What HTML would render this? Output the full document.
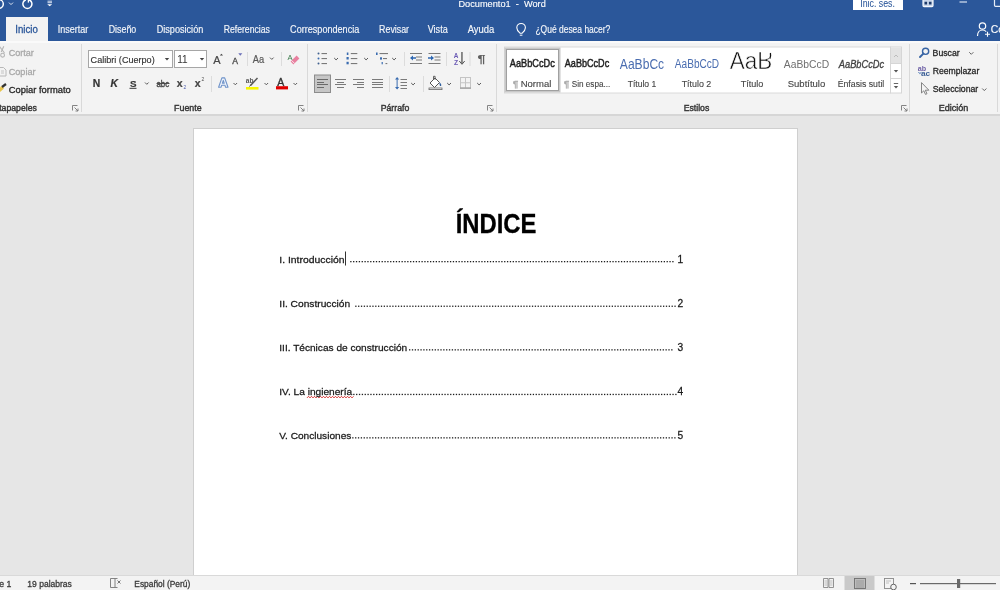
<!DOCTYPE html>
<html><head><meta charset="utf-8"><style>
*{margin:0;padding:0;box-sizing:border-box}
html,body{width:1000px;height:590px;overflow:hidden;background:#e6e6e6;font-family:"Liberation Sans",sans-serif}
body{will-change:transform}
.a{position:absolute}
svg text{font-family:"Liberation Sans",sans-serif}
</style></head><body>
<div class="a" style="left:0;top:0;width:1000px;height:41px;background:#2b579a"></div>
<div class="a" style="left:853px;top:0;width:50px;height:10px;background:#fff"></div>
<div class="a" style="left:6px;top:17px;width:41.6px;height:26px;background:#f3f3f3"></div>
<div class="a" style="left:0;top:41px;width:1000px;height:73px;background:#f3f3f3"></div>
<div class="a" style="left:0;top:41px;width:1000px;height:1.5px;background:#fafafa"></div>
<div class="a" style="left:0;top:114px;width:1000px;height:1.5px;background:#d6d6d6"></div>
<div class="a" style="left:193px;top:128px;width:605px;height:447px;background:#fff;border:1px solid #cfcfcf;border-bottom:none"></div>
<div class="a" style="left:0;top:575px;width:1000px;height:15px;background:#f3f3f3;border-top:1px solid #d9d9d9"></div>
<svg class="a" style="left:0;top:0" width="1000" height="590" viewBox="0 0 1000 590">
<g fill="none" stroke-linecap="butt">
<!-- quick access icons -->
<circle cx="-1" cy="4" r="4.3" stroke="#fff" stroke-width="1.5"/>
<path d="M9 2.6 l2 2 l2 -2" stroke="#dfe6f2" stroke-width="1"/>
<path d="M28.9 -0.3 A4.5 4.5 0 1 1 25.9 -0.3" stroke="#fff" stroke-width="1.5"/>
<path d="M28.4 -1 v3.6" stroke="#fff" stroke-width="1.3"/>
<path d="M47.5 1.2 h4.5 M47.5 2.7 h4.5" stroke="#e8eef8" stroke-width="0.9"/>
<path d="M47.2 4.2 h5 l-2.5 2z" fill="#fff" stroke="none"/>
<!-- window controls -->
<rect x="923" y="-2" width="10" height="8.6" rx="1" fill="#c9d6ea" stroke="#f4f7fc" stroke-width="1.2"/>
<path d="M924.5 1.8 h2.6 v2.6 h-2.6z M928.9 1.8 h2.6 v2.6 h-2.6z" fill="#1d3a6a" stroke="none"/>
<path d="M959.5 2 h7.5" stroke="#d8e2f2" stroke-width="1.2"/>
<rect x="994.5" y="-3" width="10" height="9.3" rx="1" stroke="#e8eef8" stroke-width="1.2"/>
<!-- lightbulb -->
<path d="M520 33.2 C518 31.5 516.8 29.8 516.8 27.8 A4.3 4.3 0 0 1 525.4 27.8 C525.4 29.8 524.2 31.5 522.2 33.2 Z" stroke="#fff" stroke-width="1.1"/>
<path d="M519.8 35.2 h2.6" stroke="#fff" stroke-width="1"/>
<!-- person -->
<circle cx="982.5" cy="26" r="3.2" stroke="#fff" stroke-width="1.2"/>
<path d="M977.5 36 C977.5 32 980 30 982.5 30 C984 30 985.3 30.6 986.2 31.6" stroke="#fff" stroke-width="1.2"/>
<path d="M985 34.2 h5 M987.5 31.7 v5" stroke="#fff" stroke-width="1.1"/>

<!-- clipboard icons -->
<path d="M-0.5 46.5 L4.5 53 M3.8 46.2 L1.2 52" stroke="#b4b4b4" stroke-width="1.1"/>
<circle cx="2.6" cy="55.2" r="1.9" stroke="#b4b4b4" stroke-width="1.1"/>
<path d="M-1 67.5 h4.5 l2.5 2.5 v6 h-7" stroke="#b8b8b8" stroke-width="1"/>
<path d="M1 71 h3 M1 73 h3" stroke="#b8b8b8" stroke-width="0.8"/>
<path d="M-1 93 C1 91 3 90 4 88 L1 86 C0 88 -1 89 -2 90 Z" fill="#e8c44a" stroke="none"/>
<path d="M2 87 L6 84" stroke="#333" stroke-width="2.2"/>

<!-- font icons row1 -->
<path d="M170 58 l-2.5 0 l1.25 1.6z" fill="#444" stroke="none"/>
<path d="M204 58 l-2.5 0 l1.25 1.6z" fill="#444" stroke="none"/>
</g>
<!-- ===== font group ===== -->
<g fill="#444" stroke="none" font-family="Liberation Sans">
<text x="213.2" y="63.8" font-size="11" fill="#484848" stroke="#484848" stroke-width="0.2">A</text>
<path d="M219.8 55.5 l1.6 -1.8 l1.6 1.8z" fill="#444"/>
<text x="232.2" y="63.5" font-size="8.6" fill="#505050" stroke="#505050" stroke-width="0.35">A</text>
<path d="M238.3 53.2 h4 l-2 2.6z" fill="#6a6fb8"/>
<text x="252.8" y="63.3" font-size="10.8" fill="#585858" stroke="#585858" stroke-width="0.2" textLength="11.4" lengthAdjust="spacingAndGlyphs">Aa</text>
<text x="92.8" y="86.6" font-size="10.4" font-weight="bold" fill="#333" stroke="#333" stroke-width="0.2">N</text>
<text x="110.6" y="86.6" font-size="10.4" font-weight="bold" font-style="italic" fill="#333" stroke="#333" stroke-width="0.2">K</text>
<text x="130" y="86.5" font-size="9.8" font-weight="bold" fill="#333" stroke="#333" stroke-width="0.15">S</text>
<rect x="129.5" y="87.8" width="7" height="1" fill="#333"/>
<text x="156.5" y="86.5" font-size="8.8" fill="#444" stroke="#444" stroke-width="0.35" textLength="12.6" lengthAdjust="spacingAndGlyphs">abc</text>
<rect x="156.5" y="83" width="13" height="0.9" fill="#444"/>
<text x="176.8" y="86.6" font-size="10.5" font-weight="bold" fill="#444" stroke="#444" stroke-width="0.2">x</text>
<text x="183.5" y="88.6" font-size="5" fill="#5565b0">2</text>
<text x="194.8" y="86.6" font-size="10.5" font-weight="bold" fill="#444" stroke="#444" stroke-width="0.2">x</text>
<text x="201.5" y="81.3" font-size="5" fill="#555">2</text>
<path d="M218.6 87.3 L221.9 77.9 L224.7 77.9 L228 87.3 L225.6 87.3 L224.9 85.2 L221.7 85.2 L221 87.3 Z M222.4 83.2 L224.2 83.2 L223.3 80.4 Z" fill="#eef3fb" fill-rule="evenodd" stroke="#6f93c9" stroke-width="1.1" stroke-linejoin="round"/>
<path d="M250.5 85.5 l7 -7.5" stroke="#555" stroke-width="1.5"/>
<path d="M249.5 86.5 l1.6 -2" stroke="#444" stroke-width="1"/>
<text x="245.8" y="82.5" font-size="6.5" font-weight="bold" fill="#555">ab</text>
<rect x="246" y="87" width="12.5" height="2.6" fill="#f5f500"/>
<text x="277.3" y="85.8" font-size="10.5" fill="#333" stroke="#333" stroke-width="0.35">A</text>
<rect x="276" y="86.2" width="12" height="3.2" fill="#e00000"/>
<path d="M290.6 61.6 L296.6 55.6 L299.4 58.4 L293.4 64.4z" fill="#e8809f"/>
<path d="M291.66 60.54 L294.46 63.34" stroke="#fff" stroke-width="0.8"/>
<text x="287.5" y="59.5" font-size="7.5" fill="#3a7a4a">A</text>
</g>
<g fill="none" stroke="#5a5a5a" stroke-width="1">
<path d="M270 57.6 l1.8 1.8 l1.8 -1.8"/>
<path d="M145 82.5 l1.8 1.8 l1.8 -1.8"/>
<path d="M233.5 83 l1.8 1.8 l1.8 -1.8"/>
<path d="M264.5 83 l1.8 1.8 l1.8 -1.8"/>
<path d="M293.5 83 l1.8 1.8 l1.8 -1.8"/>
</g>
<rect x="247" y="52" width="1" height="14" fill="#dcdcdc"/>
<rect x="281" y="52" width="1" height="14" fill="#dcdcdc"/>
<rect x="211" y="76" width="1" height="16" fill="#dcdcdc"/>

<!-- ===== paragraph group ===== -->
<g stroke="none">
<circle cx="318.5" cy="53.6" r="1" fill="#40618f"/><circle cx="318.5" cy="58.5" r="1" fill="#3a6cb0"/><circle cx="318.5" cy="63.5" r="1" fill="#40618f"/>
<rect x="321.5" y="53" width="5.5" height="1.1" fill="#7a7a7a"/><rect x="321.5" y="58" width="5.5" height="1.1" fill="#7a7a7a"/><rect x="321.5" y="63" width="5.5" height="1.1" fill="#7a7a7a"/>
<rect x="346.8" y="52.5" width="1.6" height="2.5" fill="#3a6cb0"/><rect x="346.5" y="57" width="2.2" height="2.5" fill="#3a6cb0"/><rect x="346.5" y="61.8" width="2.2" height="2.5" fill="#3a6cb0"/>
<rect x="350.8" y="53" width="6.5" height="1.1" fill="#7a7a7a"/><rect x="350.8" y="58" width="6.5" height="1.1" fill="#7a7a7a"/><rect x="350.8" y="63" width="6.5" height="1.1" fill="#7a7a7a"/>
<rect x="376" y="52.5" width="1.6" height="2.5" fill="#3a6cb0"/><rect x="380" y="57.3" width="2" height="2.3" fill="#3a6cb0"/><rect x="381.6" y="62" width="1.2" height="2.3" fill="#3a6cb0"/>
<rect x="379.5" y="53" width="8.5" height="1.1" fill="#7a7a7a"/><rect x="383" y="58" width="4" height="1.1" fill="#7a7a7a"/><rect x="385.5" y="63" width="1.8" height="1.1" fill="#7a7a7a"/>
<!-- indents -->
<rect x="410" y="53" width="12" height="1" fill="#7a7a7a"/><rect x="416" y="56.5" width="6" height="1" fill="#7a7a7a"/><rect x="416" y="59.5" width="6" height="1" fill="#7a7a7a"/><rect x="410" y="63" width="12" height="1" fill="#7a7a7a"/>
<path d="M410 58 l3 -2.6 v1.8 h3 v1.6 h-3 v1.8z" fill="#2e67b1"/>
<rect x="428.5" y="53" width="12" height="1" fill="#7a7a7a"/><rect x="434.5" y="56.5" width="6" height="1" fill="#7a7a7a"/><rect x="434.5" y="59.5" width="6" height="1" fill="#7a7a7a"/><rect x="428.5" y="63" width="12" height="1" fill="#7a7a7a"/>
<path d="M434 58 l-3 -2.6 v1.8 h-3 v1.6 h3 v1.8z" fill="#2e67b1"/>
<text x="453.7" y="57.6" font-family="Liberation Sans" font-size="6.4" font-weight="bold" fill="#6b5bb5">A</text>
<text x="453.9" y="64.6" font-family="Liberation Sans" font-size="6.8" font-weight="bold" fill="#6b5bb5">Z</text>
<rect x="461.3" y="52" width="1.3" height="11.5" fill="#555"/>
<path d="M459.3 61 l2.7 3.3 l2.7 -3.3" fill="none" stroke="#555" stroke-width="1"/>
<text x="477.6" y="62.6" font-family="Liberation Sans" font-size="11" font-weight="bold" fill="#606060" stroke="#606060" stroke-width="0.1" textLength="8" lengthAdjust="spacingAndGlyphs">¶</text>
<!-- align -->
<rect x="314.5" y="75" width="16" height="17.5" fill="#c6c6c6" stroke="#8c8c8c" stroke-width="1"/>
<rect x="317" y="79" width="11" height="1" fill="#6a6a6a"/><rect x="317" y="82" width="7" height="1" fill="#6a6a6a"/><rect x="317" y="84" width="11" height="1" fill="#6a6a6a"/><rect x="317" y="87" width="7" height="1" fill="#6a6a6a"/>
<rect x="335" y="79" width="11" height="1" fill="#7a7a7a"/><rect x="337" y="82" width="7" height="1" fill="#7a7a7a"/><rect x="335" y="84" width="11" height="1" fill="#7a7a7a"/><rect x="337" y="87" width="7" height="1" fill="#7a7a7a"/>
<rect x="353" y="79" width="11" height="1" fill="#7a7a7a"/><rect x="357" y="82" width="7" height="1" fill="#7a7a7a"/><rect x="353" y="84" width="11" height="1" fill="#7a7a7a"/><rect x="357" y="87" width="7" height="1" fill="#7a7a7a"/>
<rect x="372" y="79" width="11" height="1" fill="#7a7a7a"/><rect x="372" y="82" width="11" height="1" fill="#7a7a7a"/><rect x="372" y="84" width="11" height="1" fill="#7a7a7a"/><rect x="372" y="87" width="11" height="1" fill="#7a7a7a"/>
<!-- line spacing -->
<rect x="396.6" y="78" width="1" height="10.5" fill="#3a6cb0"/>
<path d="M395 79.5 l2.1 -2.5 l2.1 2.5z M395 87 l2.1 2.5 l2.1 -2.5z" fill="#3a6cb0"/>
<rect x="400.5" y="79" width="6.5" height="1" fill="#7a7a7a"/><rect x="400.5" y="82" width="6.5" height="1" fill="#7a7a7a"/><rect x="400.5" y="85" width="6.5" height="1" fill="#7a7a7a"/><rect x="400.5" y="88" width="6.5" height="1" fill="#7a7a7a"/>
<!-- shading -->
<path d="M430 83 l5 -5 l4.5 4.5 l-5 5z" fill="#fff" stroke="#555" stroke-width="1"/>
<path d="M433.5 79.5 v-3.2 h1.6 v3.5" fill="none" stroke="#555" stroke-width="0.9"/>
<path d="M439.5 82.5 c1.5 1 2.3 2.4 1.5 3.5 c-1 0.5 -1.6 -0.6 -1.5 -3.5z" fill="#2e5f9e"/>
<rect x="429" y="88" width="13" height="1.6" fill="#fff" stroke="#666" stroke-width="0.8"/>
<!-- borders -->
<rect x="460.5" y="77.5" width="10" height="10.5" fill="none" stroke="#c4c4c4" stroke-width="1"/>
<path d="M465.5 77.5 v10.5 M460.5 82.75 h10" stroke="#c4c4c4" stroke-width="1"/>
<rect x="460" y="87.5" width="11" height="1.2" fill="#999"/>
</g>
<g fill="none" stroke="#5a5a5a" stroke-width="1">
<path d="M334.2 58 l1.9 1.9 l1.9 -1.9"/>
<path d="M364.2 58 l1.9 1.9 l1.9 -1.9"/>
<path d="M392.2 58 l1.9 1.9 l1.9 -1.9"/>
<path d="M411.2 83 l1.9 1.9 l1.9 -1.9"/>
<path d="M447.2 83 l1.9 1.9 l1.9 -1.9"/>
<path d="M477.2 83 l1.9 1.9 l1.9 -1.9"/>
</g>
<rect x="404" y="52" width="1" height="14" fill="#dcdcdc"/>
<rect x="446" y="52" width="1" height="14" fill="#dcdcdc"/>
<rect x="469.5" y="52" width="1" height="14" fill="#dcdcdc"/>
<rect x="389" y="76" width="1" height="16" fill="#dcdcdc"/>
<rect x="423" y="76" width="1" height="16" fill="#dcdcdc"/>

<!-- group separators -->
<g fill="#d9d9d9">
<rect x="81" y="44" width="1" height="68"/>
<rect x="307" y="44" width="1" height="68"/>
<rect x="496" y="44" width="1" height="68"/>
<rect x="909" y="44" width="1" height="68"/>
<rect x="997" y="44" width="1" height="68"/>
</g>
<!-- launchers -->
<g fill="none" stroke="#777" stroke-width="0.9">
<path d="M72.5 110.5 v-5 h5 M74.5 107.5 l3.5 3.5 M75.5 111 h2.5 v-2.5"/>
<path d="M298.5 110.5 v-5 h5 M300.5 107.5 l3.5 3.5 M301.5 111 h2.5 v-2.5"/>
<path d="M487.5 110.5 v-5 h5 M489.5 107.5 l3.5 3.5 M490.5 111 h2.5 v-2.5"/>
<path d="M901.5 110.5 v-5 h5 M903.5 107.5 l3.5 3.5 M904.5 111 h2.5 v-2.5"/>
</g>
<!-- combo boxes -->
<rect x="88.5" y="50.5" width="84" height="17" fill="#fff" stroke="#a6a6a6" stroke-width="1"/>
<rect x="174.5" y="50.5" width="32" height="17" fill="#fff" stroke="#a6a6a6" stroke-width="1"/>
<path d="M164.8 58 h4.4 l-2.2 2.4z M199.8 58 h4.4 l-2.2 2.4z" fill="#444"/>

<!-- styles gallery -->
<rect x="504.5" y="47" width="386" height="46" fill="#fff" stroke="#dadada" stroke-width="1"/>
<rect x="505.5" y="48.5" width="54" height="43" fill="#fff" stroke="#c8c8c8" stroke-width="2"/>
<rect x="506.5" y="49.5" width="52" height="41" fill="none" stroke="#a0a0a0" stroke-width="1"/>
<rect x="890.5" y="47" width="11" height="46" fill="#fff" stroke="#d6d6d6" stroke-width="1"/>
<rect x="891" y="47.5" width="10" height="15.5" fill="#e3e3e3"/>
<path d="M890.5 63.5 h11 M890.5 78.5 h11" stroke="#d6d6d6" stroke-width="1"/>
<path d="M894 57 l2 -2 l2 2" fill="none" stroke="#b8b8b8" stroke-width="0.9"/>
<path d="M893.8 70 h4.4 l-2.2 2.4z" fill="#555"/>
<path d="M893.8 83.5 h4.4" stroke="#555" stroke-width="0.9"/>
<path d="M893.8 86 h4.4 l-2.2 2.4z" fill="#555"/>

<!--AAB_CLIP-->
<!-- edit group icons -->
<g fill="none" stroke-linecap="round">
<circle cx="925.6" cy="51.3" r="3.1" stroke="#3764a4" stroke-width="1.4"/>
<path d="M923.4 53.6 l-3.4 3.4" stroke="#3764a4" stroke-width="1.9"/>
<path d="M969.5 52.5 l1.8 1.8 l1.8 -1.8" stroke="#555" stroke-width="0.9"/>
<path d="M982.5 88.8 l1.8 1.8 l1.8 -1.8" stroke="#555" stroke-width="0.9"/>
<path d="M921.5 83 v10 l2.3 -2.2 l1.7 3.6 l1.5 -0.7 l-1.7 -3.5 h3.2 z" stroke="#777" stroke-width="0.9" stroke-linejoin="round"/>
</g>
<text x="917.8" y="71" font-size="8" font-weight="bold" fill="#6e60a6" textLength="8.4" lengthAdjust="spacingAndGlyphs">ab</text>
<text x="921" y="76.4" font-size="8" font-weight="bold" fill="#3b5f96" textLength="9.2" lengthAdjust="spacingAndGlyphs">ac</text>
<path d="M918.5 72 l1.2 1.6 l1.6 -1.2" fill="none" stroke="#3a6cb0" stroke-width="0.9"/>

<!-- document extras -->
<rect x="345" y="251.5" width="1" height="14" fill="#333"/>
<g fill="#1e1e1e"><rect x="350.20" y="261.00" width="1.3" height="1.3"/><rect x="353.05" y="261.00" width="1.3" height="1.3"/><rect x="355.90" y="261.00" width="1.3" height="1.3"/><rect x="358.75" y="261.00" width="1.3" height="1.3"/><rect x="361.60" y="261.00" width="1.3" height="1.3"/><rect x="364.45" y="261.00" width="1.3" height="1.3"/><rect x="367.30" y="261.00" width="1.3" height="1.3"/><rect x="370.15" y="261.00" width="1.3" height="1.3"/><rect x="373.00" y="261.00" width="1.3" height="1.3"/><rect x="375.85" y="261.00" width="1.3" height="1.3"/><rect x="378.70" y="261.00" width="1.3" height="1.3"/><rect x="381.55" y="261.00" width="1.3" height="1.3"/><rect x="384.40" y="261.00" width="1.3" height="1.3"/><rect x="387.25" y="261.00" width="1.3" height="1.3"/><rect x="390.10" y="261.00" width="1.3" height="1.3"/><rect x="392.95" y="261.00" width="1.3" height="1.3"/><rect x="395.80" y="261.00" width="1.3" height="1.3"/><rect x="398.65" y="261.00" width="1.3" height="1.3"/><rect x="401.50" y="261.00" width="1.3" height="1.3"/><rect x="404.35" y="261.00" width="1.3" height="1.3"/><rect x="407.20" y="261.00" width="1.3" height="1.3"/><rect x="410.05" y="261.00" width="1.3" height="1.3"/><rect x="412.90" y="261.00" width="1.3" height="1.3"/><rect x="415.75" y="261.00" width="1.3" height="1.3"/><rect x="418.60" y="261.00" width="1.3" height="1.3"/><rect x="421.45" y="261.00" width="1.3" height="1.3"/><rect x="424.30" y="261.00" width="1.3" height="1.3"/><rect x="427.15" y="261.00" width="1.3" height="1.3"/><rect x="430.00" y="261.00" width="1.3" height="1.3"/><rect x="432.85" y="261.00" width="1.3" height="1.3"/><rect x="435.70" y="261.00" width="1.3" height="1.3"/><rect x="438.55" y="261.00" width="1.3" height="1.3"/><rect x="441.40" y="261.00" width="1.3" height="1.3"/><rect x="444.25" y="261.00" width="1.3" height="1.3"/><rect x="447.10" y="261.00" width="1.3" height="1.3"/><rect x="449.95" y="261.00" width="1.3" height="1.3"/><rect x="452.80" y="261.00" width="1.3" height="1.3"/><rect x="455.65" y="261.00" width="1.3" height="1.3"/><rect x="458.50" y="261.00" width="1.3" height="1.3"/><rect x="461.35" y="261.00" width="1.3" height="1.3"/><rect x="464.20" y="261.00" width="1.3" height="1.3"/><rect x="467.05" y="261.00" width="1.3" height="1.3"/><rect x="469.90" y="261.00" width="1.3" height="1.3"/><rect x="472.75" y="261.00" width="1.3" height="1.3"/><rect x="475.60" y="261.00" width="1.3" height="1.3"/><rect x="478.45" y="261.00" width="1.3" height="1.3"/><rect x="481.30" y="261.00" width="1.3" height="1.3"/><rect x="484.15" y="261.00" width="1.3" height="1.3"/><rect x="487.00" y="261.00" width="1.3" height="1.3"/><rect x="489.85" y="261.00" width="1.3" height="1.3"/><rect x="492.70" y="261.00" width="1.3" height="1.3"/><rect x="495.55" y="261.00" width="1.3" height="1.3"/><rect x="498.40" y="261.00" width="1.3" height="1.3"/><rect x="501.25" y="261.00" width="1.3" height="1.3"/><rect x="504.10" y="261.00" width="1.3" height="1.3"/><rect x="506.95" y="261.00" width="1.3" height="1.3"/><rect x="509.80" y="261.00" width="1.3" height="1.3"/><rect x="512.65" y="261.00" width="1.3" height="1.3"/><rect x="515.50" y="261.00" width="1.3" height="1.3"/><rect x="518.35" y="261.00" width="1.3" height="1.3"/><rect x="521.20" y="261.00" width="1.3" height="1.3"/><rect x="524.05" y="261.00" width="1.3" height="1.3"/><rect x="526.90" y="261.00" width="1.3" height="1.3"/><rect x="529.75" y="261.00" width="1.3" height="1.3"/><rect x="532.60" y="261.00" width="1.3" height="1.3"/><rect x="535.45" y="261.00" width="1.3" height="1.3"/><rect x="538.30" y="261.00" width="1.3" height="1.3"/><rect x="541.15" y="261.00" width="1.3" height="1.3"/><rect x="544.00" y="261.00" width="1.3" height="1.3"/><rect x="546.85" y="261.00" width="1.3" height="1.3"/><rect x="549.70" y="261.00" width="1.3" height="1.3"/><rect x="552.55" y="261.00" width="1.3" height="1.3"/><rect x="555.40" y="261.00" width="1.3" height="1.3"/><rect x="558.25" y="261.00" width="1.3" height="1.3"/><rect x="561.10" y="261.00" width="1.3" height="1.3"/><rect x="563.95" y="261.00" width="1.3" height="1.3"/><rect x="566.80" y="261.00" width="1.3" height="1.3"/><rect x="569.65" y="261.00" width="1.3" height="1.3"/><rect x="572.50" y="261.00" width="1.3" height="1.3"/><rect x="575.35" y="261.00" width="1.3" height="1.3"/><rect x="578.20" y="261.00" width="1.3" height="1.3"/><rect x="581.05" y="261.00" width="1.3" height="1.3"/><rect x="583.90" y="261.00" width="1.3" height="1.3"/><rect x="586.75" y="261.00" width="1.3" height="1.3"/><rect x="589.60" y="261.00" width="1.3" height="1.3"/><rect x="592.45" y="261.00" width="1.3" height="1.3"/><rect x="595.30" y="261.00" width="1.3" height="1.3"/><rect x="598.15" y="261.00" width="1.3" height="1.3"/><rect x="601.00" y="261.00" width="1.3" height="1.3"/><rect x="603.85" y="261.00" width="1.3" height="1.3"/><rect x="606.70" y="261.00" width="1.3" height="1.3"/><rect x="609.55" y="261.00" width="1.3" height="1.3"/><rect x="612.40" y="261.00" width="1.3" height="1.3"/><rect x="615.25" y="261.00" width="1.3" height="1.3"/><rect x="618.10" y="261.00" width="1.3" height="1.3"/><rect x="620.95" y="261.00" width="1.3" height="1.3"/><rect x="623.80" y="261.00" width="1.3" height="1.3"/><rect x="626.65" y="261.00" width="1.3" height="1.3"/><rect x="629.50" y="261.00" width="1.3" height="1.3"/><rect x="632.35" y="261.00" width="1.3" height="1.3"/><rect x="635.20" y="261.00" width="1.3" height="1.3"/><rect x="638.05" y="261.00" width="1.3" height="1.3"/><rect x="640.90" y="261.00" width="1.3" height="1.3"/><rect x="643.75" y="261.00" width="1.3" height="1.3"/><rect x="646.60" y="261.00" width="1.3" height="1.3"/><rect x="649.45" y="261.00" width="1.3" height="1.3"/><rect x="652.30" y="261.00" width="1.3" height="1.3"/><rect x="655.15" y="261.00" width="1.3" height="1.3"/><rect x="658.00" y="261.00" width="1.3" height="1.3"/><rect x="660.85" y="261.00" width="1.3" height="1.3"/><rect x="663.70" y="261.00" width="1.3" height="1.3"/><rect x="666.55" y="261.00" width="1.3" height="1.3"/><rect x="669.40" y="261.00" width="1.3" height="1.3"/><rect x="672.25" y="261.00" width="1.3" height="1.3"/><rect x="355.20" y="305.60" width="1.3" height="1.3"/><rect x="358.05" y="305.60" width="1.3" height="1.3"/><rect x="360.90" y="305.60" width="1.3" height="1.3"/><rect x="363.75" y="305.60" width="1.3" height="1.3"/><rect x="366.60" y="305.60" width="1.3" height="1.3"/><rect x="369.45" y="305.60" width="1.3" height="1.3"/><rect x="372.30" y="305.60" width="1.3" height="1.3"/><rect x="375.15" y="305.60" width="1.3" height="1.3"/><rect x="378.00" y="305.60" width="1.3" height="1.3"/><rect x="380.85" y="305.60" width="1.3" height="1.3"/><rect x="383.70" y="305.60" width="1.3" height="1.3"/><rect x="386.55" y="305.60" width="1.3" height="1.3"/><rect x="389.40" y="305.60" width="1.3" height="1.3"/><rect x="392.25" y="305.60" width="1.3" height="1.3"/><rect x="395.10" y="305.60" width="1.3" height="1.3"/><rect x="397.95" y="305.60" width="1.3" height="1.3"/><rect x="400.80" y="305.60" width="1.3" height="1.3"/><rect x="403.65" y="305.60" width="1.3" height="1.3"/><rect x="406.50" y="305.60" width="1.3" height="1.3"/><rect x="409.35" y="305.60" width="1.3" height="1.3"/><rect x="412.20" y="305.60" width="1.3" height="1.3"/><rect x="415.05" y="305.60" width="1.3" height="1.3"/><rect x="417.90" y="305.60" width="1.3" height="1.3"/><rect x="420.75" y="305.60" width="1.3" height="1.3"/><rect x="423.60" y="305.60" width="1.3" height="1.3"/><rect x="426.45" y="305.60" width="1.3" height="1.3"/><rect x="429.30" y="305.60" width="1.3" height="1.3"/><rect x="432.15" y="305.60" width="1.3" height="1.3"/><rect x="435.00" y="305.60" width="1.3" height="1.3"/><rect x="437.85" y="305.60" width="1.3" height="1.3"/><rect x="440.70" y="305.60" width="1.3" height="1.3"/><rect x="443.55" y="305.60" width="1.3" height="1.3"/><rect x="446.40" y="305.60" width="1.3" height="1.3"/><rect x="449.25" y="305.60" width="1.3" height="1.3"/><rect x="452.10" y="305.60" width="1.3" height="1.3"/><rect x="454.95" y="305.60" width="1.3" height="1.3"/><rect x="457.80" y="305.60" width="1.3" height="1.3"/><rect x="460.65" y="305.60" width="1.3" height="1.3"/><rect x="463.50" y="305.60" width="1.3" height="1.3"/><rect x="466.35" y="305.60" width="1.3" height="1.3"/><rect x="469.20" y="305.60" width="1.3" height="1.3"/><rect x="472.05" y="305.60" width="1.3" height="1.3"/><rect x="474.90" y="305.60" width="1.3" height="1.3"/><rect x="477.75" y="305.60" width="1.3" height="1.3"/><rect x="480.60" y="305.60" width="1.3" height="1.3"/><rect x="483.45" y="305.60" width="1.3" height="1.3"/><rect x="486.30" y="305.60" width="1.3" height="1.3"/><rect x="489.15" y="305.60" width="1.3" height="1.3"/><rect x="492.00" y="305.60" width="1.3" height="1.3"/><rect x="494.85" y="305.60" width="1.3" height="1.3"/><rect x="497.70" y="305.60" width="1.3" height="1.3"/><rect x="500.55" y="305.60" width="1.3" height="1.3"/><rect x="503.40" y="305.60" width="1.3" height="1.3"/><rect x="506.25" y="305.60" width="1.3" height="1.3"/><rect x="509.10" y="305.60" width="1.3" height="1.3"/><rect x="511.95" y="305.60" width="1.3" height="1.3"/><rect x="514.80" y="305.60" width="1.3" height="1.3"/><rect x="517.65" y="305.60" width="1.3" height="1.3"/><rect x="520.50" y="305.60" width="1.3" height="1.3"/><rect x="523.35" y="305.60" width="1.3" height="1.3"/><rect x="526.20" y="305.60" width="1.3" height="1.3"/><rect x="529.05" y="305.60" width="1.3" height="1.3"/><rect x="531.90" y="305.60" width="1.3" height="1.3"/><rect x="534.75" y="305.60" width="1.3" height="1.3"/><rect x="537.60" y="305.60" width="1.3" height="1.3"/><rect x="540.45" y="305.60" width="1.3" height="1.3"/><rect x="543.30" y="305.60" width="1.3" height="1.3"/><rect x="546.15" y="305.60" width="1.3" height="1.3"/><rect x="549.00" y="305.60" width="1.3" height="1.3"/><rect x="551.85" y="305.60" width="1.3" height="1.3"/><rect x="554.70" y="305.60" width="1.3" height="1.3"/><rect x="557.55" y="305.60" width="1.3" height="1.3"/><rect x="560.40" y="305.60" width="1.3" height="1.3"/><rect x="563.25" y="305.60" width="1.3" height="1.3"/><rect x="566.10" y="305.60" width="1.3" height="1.3"/><rect x="568.95" y="305.60" width="1.3" height="1.3"/><rect x="571.80" y="305.60" width="1.3" height="1.3"/><rect x="574.65" y="305.60" width="1.3" height="1.3"/><rect x="577.50" y="305.60" width="1.3" height="1.3"/><rect x="580.35" y="305.60" width="1.3" height="1.3"/><rect x="583.20" y="305.60" width="1.3" height="1.3"/><rect x="586.05" y="305.60" width="1.3" height="1.3"/><rect x="588.90" y="305.60" width="1.3" height="1.3"/><rect x="591.75" y="305.60" width="1.3" height="1.3"/><rect x="594.60" y="305.60" width="1.3" height="1.3"/><rect x="597.45" y="305.60" width="1.3" height="1.3"/><rect x="600.30" y="305.60" width="1.3" height="1.3"/><rect x="603.15" y="305.60" width="1.3" height="1.3"/><rect x="606.00" y="305.60" width="1.3" height="1.3"/><rect x="608.85" y="305.60" width="1.3" height="1.3"/><rect x="611.70" y="305.60" width="1.3" height="1.3"/><rect x="614.55" y="305.60" width="1.3" height="1.3"/><rect x="617.40" y="305.60" width="1.3" height="1.3"/><rect x="620.25" y="305.60" width="1.3" height="1.3"/><rect x="623.10" y="305.60" width="1.3" height="1.3"/><rect x="625.95" y="305.60" width="1.3" height="1.3"/><rect x="628.80" y="305.60" width="1.3" height="1.3"/><rect x="631.65" y="305.60" width="1.3" height="1.3"/><rect x="634.50" y="305.60" width="1.3" height="1.3"/><rect x="637.35" y="305.60" width="1.3" height="1.3"/><rect x="640.20" y="305.60" width="1.3" height="1.3"/><rect x="643.05" y="305.60" width="1.3" height="1.3"/><rect x="645.90" y="305.60" width="1.3" height="1.3"/><rect x="648.75" y="305.60" width="1.3" height="1.3"/><rect x="651.60" y="305.60" width="1.3" height="1.3"/><rect x="654.45" y="305.60" width="1.3" height="1.3"/><rect x="657.30" y="305.60" width="1.3" height="1.3"/><rect x="660.15" y="305.60" width="1.3" height="1.3"/><rect x="663.00" y="305.60" width="1.3" height="1.3"/><rect x="665.85" y="305.60" width="1.3" height="1.3"/><rect x="668.70" y="305.60" width="1.3" height="1.3"/><rect x="671.55" y="305.60" width="1.3" height="1.3"/><rect x="674.40" y="305.60" width="1.3" height="1.3"/><rect x="409.00" y="349.20" width="1.3" height="1.3"/><rect x="411.85" y="349.20" width="1.3" height="1.3"/><rect x="414.70" y="349.20" width="1.3" height="1.3"/><rect x="417.55" y="349.20" width="1.3" height="1.3"/><rect x="420.40" y="349.20" width="1.3" height="1.3"/><rect x="423.25" y="349.20" width="1.3" height="1.3"/><rect x="426.10" y="349.20" width="1.3" height="1.3"/><rect x="428.95" y="349.20" width="1.3" height="1.3"/><rect x="431.80" y="349.20" width="1.3" height="1.3"/><rect x="434.65" y="349.20" width="1.3" height="1.3"/><rect x="437.50" y="349.20" width="1.3" height="1.3"/><rect x="440.35" y="349.20" width="1.3" height="1.3"/><rect x="443.20" y="349.20" width="1.3" height="1.3"/><rect x="446.05" y="349.20" width="1.3" height="1.3"/><rect x="448.90" y="349.20" width="1.3" height="1.3"/><rect x="451.75" y="349.20" width="1.3" height="1.3"/><rect x="454.60" y="349.20" width="1.3" height="1.3"/><rect x="457.45" y="349.20" width="1.3" height="1.3"/><rect x="460.30" y="349.20" width="1.3" height="1.3"/><rect x="463.15" y="349.20" width="1.3" height="1.3"/><rect x="466.00" y="349.20" width="1.3" height="1.3"/><rect x="468.85" y="349.20" width="1.3" height="1.3"/><rect x="471.70" y="349.20" width="1.3" height="1.3"/><rect x="474.55" y="349.20" width="1.3" height="1.3"/><rect x="477.40" y="349.20" width="1.3" height="1.3"/><rect x="480.25" y="349.20" width="1.3" height="1.3"/><rect x="483.10" y="349.20" width="1.3" height="1.3"/><rect x="485.95" y="349.20" width="1.3" height="1.3"/><rect x="488.80" y="349.20" width="1.3" height="1.3"/><rect x="491.65" y="349.20" width="1.3" height="1.3"/><rect x="494.50" y="349.20" width="1.3" height="1.3"/><rect x="497.35" y="349.20" width="1.3" height="1.3"/><rect x="500.20" y="349.20" width="1.3" height="1.3"/><rect x="503.05" y="349.20" width="1.3" height="1.3"/><rect x="505.90" y="349.20" width="1.3" height="1.3"/><rect x="508.75" y="349.20" width="1.3" height="1.3"/><rect x="511.60" y="349.20" width="1.3" height="1.3"/><rect x="514.45" y="349.20" width="1.3" height="1.3"/><rect x="517.30" y="349.20" width="1.3" height="1.3"/><rect x="520.15" y="349.20" width="1.3" height="1.3"/><rect x="523.00" y="349.20" width="1.3" height="1.3"/><rect x="525.85" y="349.20" width="1.3" height="1.3"/><rect x="528.70" y="349.20" width="1.3" height="1.3"/><rect x="531.55" y="349.20" width="1.3" height="1.3"/><rect x="534.40" y="349.20" width="1.3" height="1.3"/><rect x="537.25" y="349.20" width="1.3" height="1.3"/><rect x="540.10" y="349.20" width="1.3" height="1.3"/><rect x="542.95" y="349.20" width="1.3" height="1.3"/><rect x="545.80" y="349.20" width="1.3" height="1.3"/><rect x="548.65" y="349.20" width="1.3" height="1.3"/><rect x="551.50" y="349.20" width="1.3" height="1.3"/><rect x="554.35" y="349.20" width="1.3" height="1.3"/><rect x="557.20" y="349.20" width="1.3" height="1.3"/><rect x="560.05" y="349.20" width="1.3" height="1.3"/><rect x="562.90" y="349.20" width="1.3" height="1.3"/><rect x="565.75" y="349.20" width="1.3" height="1.3"/><rect x="568.60" y="349.20" width="1.3" height="1.3"/><rect x="571.45" y="349.20" width="1.3" height="1.3"/><rect x="574.30" y="349.20" width="1.3" height="1.3"/><rect x="577.15" y="349.20" width="1.3" height="1.3"/><rect x="580.00" y="349.20" width="1.3" height="1.3"/><rect x="582.85" y="349.20" width="1.3" height="1.3"/><rect x="585.70" y="349.20" width="1.3" height="1.3"/><rect x="588.55" y="349.20" width="1.3" height="1.3"/><rect x="591.40" y="349.20" width="1.3" height="1.3"/><rect x="594.25" y="349.20" width="1.3" height="1.3"/><rect x="597.10" y="349.20" width="1.3" height="1.3"/><rect x="599.95" y="349.20" width="1.3" height="1.3"/><rect x="602.80" y="349.20" width="1.3" height="1.3"/><rect x="605.65" y="349.20" width="1.3" height="1.3"/><rect x="608.50" y="349.20" width="1.3" height="1.3"/><rect x="611.35" y="349.20" width="1.3" height="1.3"/><rect x="614.20" y="349.20" width="1.3" height="1.3"/><rect x="617.05" y="349.20" width="1.3" height="1.3"/><rect x="619.90" y="349.20" width="1.3" height="1.3"/><rect x="622.75" y="349.20" width="1.3" height="1.3"/><rect x="625.60" y="349.20" width="1.3" height="1.3"/><rect x="628.45" y="349.20" width="1.3" height="1.3"/><rect x="631.30" y="349.20" width="1.3" height="1.3"/><rect x="634.15" y="349.20" width="1.3" height="1.3"/><rect x="637.00" y="349.20" width="1.3" height="1.3"/><rect x="639.85" y="349.20" width="1.3" height="1.3"/><rect x="642.70" y="349.20" width="1.3" height="1.3"/><rect x="645.55" y="349.20" width="1.3" height="1.3"/><rect x="648.40" y="349.20" width="1.3" height="1.3"/><rect x="651.25" y="349.20" width="1.3" height="1.3"/><rect x="654.10" y="349.20" width="1.3" height="1.3"/><rect x="656.95" y="349.20" width="1.3" height="1.3"/><rect x="659.80" y="349.20" width="1.3" height="1.3"/><rect x="662.65" y="349.20" width="1.3" height="1.3"/><rect x="665.50" y="349.20" width="1.3" height="1.3"/><rect x="668.35" y="349.20" width="1.3" height="1.3"/><rect x="671.20" y="349.20" width="1.3" height="1.3"/><rect x="353.20" y="393.80" width="1.3" height="1.3"/><rect x="356.05" y="393.80" width="1.3" height="1.3"/><rect x="358.90" y="393.80" width="1.3" height="1.3"/><rect x="361.75" y="393.80" width="1.3" height="1.3"/><rect x="364.60" y="393.80" width="1.3" height="1.3"/><rect x="367.45" y="393.80" width="1.3" height="1.3"/><rect x="370.30" y="393.80" width="1.3" height="1.3"/><rect x="373.15" y="393.80" width="1.3" height="1.3"/><rect x="376.00" y="393.80" width="1.3" height="1.3"/><rect x="378.85" y="393.80" width="1.3" height="1.3"/><rect x="381.70" y="393.80" width="1.3" height="1.3"/><rect x="384.55" y="393.80" width="1.3" height="1.3"/><rect x="387.40" y="393.80" width="1.3" height="1.3"/><rect x="390.25" y="393.80" width="1.3" height="1.3"/><rect x="393.10" y="393.80" width="1.3" height="1.3"/><rect x="395.95" y="393.80" width="1.3" height="1.3"/><rect x="398.80" y="393.80" width="1.3" height="1.3"/><rect x="401.65" y="393.80" width="1.3" height="1.3"/><rect x="404.50" y="393.80" width="1.3" height="1.3"/><rect x="407.35" y="393.80" width="1.3" height="1.3"/><rect x="410.20" y="393.80" width="1.3" height="1.3"/><rect x="413.05" y="393.80" width="1.3" height="1.3"/><rect x="415.90" y="393.80" width="1.3" height="1.3"/><rect x="418.75" y="393.80" width="1.3" height="1.3"/><rect x="421.60" y="393.80" width="1.3" height="1.3"/><rect x="424.45" y="393.80" width="1.3" height="1.3"/><rect x="427.30" y="393.80" width="1.3" height="1.3"/><rect x="430.15" y="393.80" width="1.3" height="1.3"/><rect x="433.00" y="393.80" width="1.3" height="1.3"/><rect x="435.85" y="393.80" width="1.3" height="1.3"/><rect x="438.70" y="393.80" width="1.3" height="1.3"/><rect x="441.55" y="393.80" width="1.3" height="1.3"/><rect x="444.40" y="393.80" width="1.3" height="1.3"/><rect x="447.25" y="393.80" width="1.3" height="1.3"/><rect x="450.10" y="393.80" width="1.3" height="1.3"/><rect x="452.95" y="393.80" width="1.3" height="1.3"/><rect x="455.80" y="393.80" width="1.3" height="1.3"/><rect x="458.65" y="393.80" width="1.3" height="1.3"/><rect x="461.50" y="393.80" width="1.3" height="1.3"/><rect x="464.35" y="393.80" width="1.3" height="1.3"/><rect x="467.20" y="393.80" width="1.3" height="1.3"/><rect x="470.05" y="393.80" width="1.3" height="1.3"/><rect x="472.90" y="393.80" width="1.3" height="1.3"/><rect x="475.75" y="393.80" width="1.3" height="1.3"/><rect x="478.60" y="393.80" width="1.3" height="1.3"/><rect x="481.45" y="393.80" width="1.3" height="1.3"/><rect x="484.30" y="393.80" width="1.3" height="1.3"/><rect x="487.15" y="393.80" width="1.3" height="1.3"/><rect x="490.00" y="393.80" width="1.3" height="1.3"/><rect x="492.85" y="393.80" width="1.3" height="1.3"/><rect x="495.70" y="393.80" width="1.3" height="1.3"/><rect x="498.55" y="393.80" width="1.3" height="1.3"/><rect x="501.40" y="393.80" width="1.3" height="1.3"/><rect x="504.25" y="393.80" width="1.3" height="1.3"/><rect x="507.10" y="393.80" width="1.3" height="1.3"/><rect x="509.95" y="393.80" width="1.3" height="1.3"/><rect x="512.80" y="393.80" width="1.3" height="1.3"/><rect x="515.65" y="393.80" width="1.3" height="1.3"/><rect x="518.50" y="393.80" width="1.3" height="1.3"/><rect x="521.35" y="393.80" width="1.3" height="1.3"/><rect x="524.20" y="393.80" width="1.3" height="1.3"/><rect x="527.05" y="393.80" width="1.3" height="1.3"/><rect x="529.90" y="393.80" width="1.3" height="1.3"/><rect x="532.75" y="393.80" width="1.3" height="1.3"/><rect x="535.60" y="393.80" width="1.3" height="1.3"/><rect x="538.45" y="393.80" width="1.3" height="1.3"/><rect x="541.30" y="393.80" width="1.3" height="1.3"/><rect x="544.15" y="393.80" width="1.3" height="1.3"/><rect x="547.00" y="393.80" width="1.3" height="1.3"/><rect x="549.85" y="393.80" width="1.3" height="1.3"/><rect x="552.70" y="393.80" width="1.3" height="1.3"/><rect x="555.55" y="393.80" width="1.3" height="1.3"/><rect x="558.40" y="393.80" width="1.3" height="1.3"/><rect x="561.25" y="393.80" width="1.3" height="1.3"/><rect x="564.10" y="393.80" width="1.3" height="1.3"/><rect x="566.95" y="393.80" width="1.3" height="1.3"/><rect x="569.80" y="393.80" width="1.3" height="1.3"/><rect x="572.65" y="393.80" width="1.3" height="1.3"/><rect x="575.50" y="393.80" width="1.3" height="1.3"/><rect x="578.35" y="393.80" width="1.3" height="1.3"/><rect x="581.20" y="393.80" width="1.3" height="1.3"/><rect x="584.05" y="393.80" width="1.3" height="1.3"/><rect x="586.90" y="393.80" width="1.3" height="1.3"/><rect x="589.75" y="393.80" width="1.3" height="1.3"/><rect x="592.60" y="393.80" width="1.3" height="1.3"/><rect x="595.45" y="393.80" width="1.3" height="1.3"/><rect x="598.30" y="393.80" width="1.3" height="1.3"/><rect x="601.15" y="393.80" width="1.3" height="1.3"/><rect x="604.00" y="393.80" width="1.3" height="1.3"/><rect x="606.85" y="393.80" width="1.3" height="1.3"/><rect x="609.70" y="393.80" width="1.3" height="1.3"/><rect x="612.55" y="393.80" width="1.3" height="1.3"/><rect x="615.40" y="393.80" width="1.3" height="1.3"/><rect x="618.25" y="393.80" width="1.3" height="1.3"/><rect x="621.10" y="393.80" width="1.3" height="1.3"/><rect x="623.95" y="393.80" width="1.3" height="1.3"/><rect x="626.80" y="393.80" width="1.3" height="1.3"/><rect x="629.65" y="393.80" width="1.3" height="1.3"/><rect x="632.50" y="393.80" width="1.3" height="1.3"/><rect x="635.35" y="393.80" width="1.3" height="1.3"/><rect x="638.20" y="393.80" width="1.3" height="1.3"/><rect x="641.05" y="393.80" width="1.3" height="1.3"/><rect x="643.90" y="393.80" width="1.3" height="1.3"/><rect x="646.75" y="393.80" width="1.3" height="1.3"/><rect x="649.60" y="393.80" width="1.3" height="1.3"/><rect x="652.45" y="393.80" width="1.3" height="1.3"/><rect x="655.30" y="393.80" width="1.3" height="1.3"/><rect x="658.15" y="393.80" width="1.3" height="1.3"/><rect x="661.00" y="393.80" width="1.3" height="1.3"/><rect x="663.85" y="393.80" width="1.3" height="1.3"/><rect x="666.70" y="393.80" width="1.3" height="1.3"/><rect x="669.55" y="393.80" width="1.3" height="1.3"/><rect x="672.40" y="393.80" width="1.3" height="1.3"/><rect x="675.25" y="393.80" width="1.3" height="1.3"/><rect x="352.20" y="437.20" width="1.3" height="1.3"/><rect x="355.05" y="437.20" width="1.3" height="1.3"/><rect x="357.90" y="437.20" width="1.3" height="1.3"/><rect x="360.75" y="437.20" width="1.3" height="1.3"/><rect x="363.60" y="437.20" width="1.3" height="1.3"/><rect x="366.45" y="437.20" width="1.3" height="1.3"/><rect x="369.30" y="437.20" width="1.3" height="1.3"/><rect x="372.15" y="437.20" width="1.3" height="1.3"/><rect x="375.00" y="437.20" width="1.3" height="1.3"/><rect x="377.85" y="437.20" width="1.3" height="1.3"/><rect x="380.70" y="437.20" width="1.3" height="1.3"/><rect x="383.55" y="437.20" width="1.3" height="1.3"/><rect x="386.40" y="437.20" width="1.3" height="1.3"/><rect x="389.25" y="437.20" width="1.3" height="1.3"/><rect x="392.10" y="437.20" width="1.3" height="1.3"/><rect x="394.95" y="437.20" width="1.3" height="1.3"/><rect x="397.80" y="437.20" width="1.3" height="1.3"/><rect x="400.65" y="437.20" width="1.3" height="1.3"/><rect x="403.50" y="437.20" width="1.3" height="1.3"/><rect x="406.35" y="437.20" width="1.3" height="1.3"/><rect x="409.20" y="437.20" width="1.3" height="1.3"/><rect x="412.05" y="437.20" width="1.3" height="1.3"/><rect x="414.90" y="437.20" width="1.3" height="1.3"/><rect x="417.75" y="437.20" width="1.3" height="1.3"/><rect x="420.60" y="437.20" width="1.3" height="1.3"/><rect x="423.45" y="437.20" width="1.3" height="1.3"/><rect x="426.30" y="437.20" width="1.3" height="1.3"/><rect x="429.15" y="437.20" width="1.3" height="1.3"/><rect x="432.00" y="437.20" width="1.3" height="1.3"/><rect x="434.85" y="437.20" width="1.3" height="1.3"/><rect x="437.70" y="437.20" width="1.3" height="1.3"/><rect x="440.55" y="437.20" width="1.3" height="1.3"/><rect x="443.40" y="437.20" width="1.3" height="1.3"/><rect x="446.25" y="437.20" width="1.3" height="1.3"/><rect x="449.10" y="437.20" width="1.3" height="1.3"/><rect x="451.95" y="437.20" width="1.3" height="1.3"/><rect x="454.80" y="437.20" width="1.3" height="1.3"/><rect x="457.65" y="437.20" width="1.3" height="1.3"/><rect x="460.50" y="437.20" width="1.3" height="1.3"/><rect x="463.35" y="437.20" width="1.3" height="1.3"/><rect x="466.20" y="437.20" width="1.3" height="1.3"/><rect x="469.05" y="437.20" width="1.3" height="1.3"/><rect x="471.90" y="437.20" width="1.3" height="1.3"/><rect x="474.75" y="437.20" width="1.3" height="1.3"/><rect x="477.60" y="437.20" width="1.3" height="1.3"/><rect x="480.45" y="437.20" width="1.3" height="1.3"/><rect x="483.30" y="437.20" width="1.3" height="1.3"/><rect x="486.15" y="437.20" width="1.3" height="1.3"/><rect x="489.00" y="437.20" width="1.3" height="1.3"/><rect x="491.85" y="437.20" width="1.3" height="1.3"/><rect x="494.70" y="437.20" width="1.3" height="1.3"/><rect x="497.55" y="437.20" width="1.3" height="1.3"/><rect x="500.40" y="437.20" width="1.3" height="1.3"/><rect x="503.25" y="437.20" width="1.3" height="1.3"/><rect x="506.10" y="437.20" width="1.3" height="1.3"/><rect x="508.95" y="437.20" width="1.3" height="1.3"/><rect x="511.80" y="437.20" width="1.3" height="1.3"/><rect x="514.65" y="437.20" width="1.3" height="1.3"/><rect x="517.50" y="437.20" width="1.3" height="1.3"/><rect x="520.35" y="437.20" width="1.3" height="1.3"/><rect x="523.20" y="437.20" width="1.3" height="1.3"/><rect x="526.05" y="437.20" width="1.3" height="1.3"/><rect x="528.90" y="437.20" width="1.3" height="1.3"/><rect x="531.75" y="437.20" width="1.3" height="1.3"/><rect x="534.60" y="437.20" width="1.3" height="1.3"/><rect x="537.45" y="437.20" width="1.3" height="1.3"/><rect x="540.30" y="437.20" width="1.3" height="1.3"/><rect x="543.15" y="437.20" width="1.3" height="1.3"/><rect x="546.00" y="437.20" width="1.3" height="1.3"/><rect x="548.85" y="437.20" width="1.3" height="1.3"/><rect x="551.70" y="437.20" width="1.3" height="1.3"/><rect x="554.55" y="437.20" width="1.3" height="1.3"/><rect x="557.40" y="437.20" width="1.3" height="1.3"/><rect x="560.25" y="437.20" width="1.3" height="1.3"/><rect x="563.10" y="437.20" width="1.3" height="1.3"/><rect x="565.95" y="437.20" width="1.3" height="1.3"/><rect x="568.80" y="437.20" width="1.3" height="1.3"/><rect x="571.65" y="437.20" width="1.3" height="1.3"/><rect x="574.50" y="437.20" width="1.3" height="1.3"/><rect x="577.35" y="437.20" width="1.3" height="1.3"/><rect x="580.20" y="437.20" width="1.3" height="1.3"/><rect x="583.05" y="437.20" width="1.3" height="1.3"/><rect x="585.90" y="437.20" width="1.3" height="1.3"/><rect x="588.75" y="437.20" width="1.3" height="1.3"/><rect x="591.60" y="437.20" width="1.3" height="1.3"/><rect x="594.45" y="437.20" width="1.3" height="1.3"/><rect x="597.30" y="437.20" width="1.3" height="1.3"/><rect x="600.15" y="437.20" width="1.3" height="1.3"/><rect x="603.00" y="437.20" width="1.3" height="1.3"/><rect x="605.85" y="437.20" width="1.3" height="1.3"/><rect x="608.70" y="437.20" width="1.3" height="1.3"/><rect x="611.55" y="437.20" width="1.3" height="1.3"/><rect x="614.40" y="437.20" width="1.3" height="1.3"/><rect x="617.25" y="437.20" width="1.3" height="1.3"/><rect x="620.10" y="437.20" width="1.3" height="1.3"/><rect x="622.95" y="437.20" width="1.3" height="1.3"/><rect x="625.80" y="437.20" width="1.3" height="1.3"/><rect x="628.65" y="437.20" width="1.3" height="1.3"/><rect x="631.50" y="437.20" width="1.3" height="1.3"/><rect x="634.35" y="437.20" width="1.3" height="1.3"/><rect x="637.20" y="437.20" width="1.3" height="1.3"/><rect x="640.05" y="437.20" width="1.3" height="1.3"/><rect x="642.90" y="437.20" width="1.3" height="1.3"/><rect x="645.75" y="437.20" width="1.3" height="1.3"/><rect x="648.60" y="437.20" width="1.3" height="1.3"/><rect x="651.45" y="437.20" width="1.3" height="1.3"/><rect x="654.30" y="437.20" width="1.3" height="1.3"/><rect x="657.15" y="437.20" width="1.3" height="1.3"/><rect x="660.00" y="437.20" width="1.3" height="1.3"/><rect x="662.85" y="437.20" width="1.3" height="1.3"/><rect x="665.70" y="437.20" width="1.3" height="1.3"/><rect x="668.55" y="437.20" width="1.3" height="1.3"/><rect x="671.40" y="437.20" width="1.3" height="1.3"/><rect x="674.25" y="437.20" width="1.3" height="1.3"/></g>
<defs>
<pattern id="dotpat" patternUnits="userSpaceOnUse" x="0" y="0" width="2.85" height="10">
<rect x="0" y="0" width="1.35" height="10" fill="#1a1a1a"/>
</pattern>
<pattern id="squig" patternUnits="userSpaceOnUse" x="307" y="395.6" width="3" height="3">
<path d="M0 2.3 L1.5 0.7 L3 2.3" fill="none" stroke="#d42020" stroke-width="0.85"/>
</pattern>
</defs>
<polyline points="307.0 397.9 308.5 396.3 310.0 397.9 311.5 396.3 313.0 397.9 314.5 396.3 316.0 397.9 317.5 396.3 319.0 397.9 320.5 396.3 322.0 397.9 323.5 396.3 325.0 397.9 326.5 396.3 328.0 397.9 329.5 396.3 331.0 397.9 332.5 396.3 334.0 397.9 335.5 396.3 337.0 397.9 338.5 396.3 340.0 397.9 341.5 396.3 343.0 397.9 344.5 396.3 346.0 397.9 347.5 396.3 349.0 397.9 350.5 396.3 352.0 397.9 353.5 396.3" fill="none" stroke="#d42424" stroke-width="0.9"/>

<!-- status bar icons -->
<g fill="none" stroke="#777" stroke-width="0.9">
<path d="M110.5 578.5 h4.5 v9 h-4.5z M115 578.5 h2.5 M115 587.5 h2.5"/>
<path d="M117.5 580.5 l3 3 M120.5 580.5 l-3 3" stroke="#666"/>
<path d="M823.5 578.5 h4.5 v9 h-4.5z M829 578.5 h4.5 v9 h-4.5z" stroke="#888"/>
<path d="M824.5 581 h2.5 M824.5 583 h2.5 M824.5 585 h2.5 M830 581 h2.5 M830 583 h2.5 M830 585 h2.5" stroke="#aaa" stroke-width="0.7"/>
</g>
<rect x="844.5" y="576" width="30" height="14" fill="#c9c9c9"/>
<rect x="854.5" y="578.5" width="11" height="10" fill="#bdbdbd" stroke="#6e6e6e" stroke-width="0.9"/>
<path d="M856 581 h8 M856 583 h8 M856 585 h8 M856 587 h8" stroke="#8a8a8a" stroke-width="0.7"/>
<rect x="884.5" y="578.5" width="9" height="10" fill="none" stroke="#888" stroke-width="0.9"/>
<path d="M886 581 h5 M886 583 h3" stroke="#aaa" stroke-width="0.7"/>
<circle cx="893.5" cy="587" r="2.8" fill="#f3f3f3" stroke="#555" stroke-width="0.9"/>
<rect x="910" y="583" width="6" height="1.2" fill="#555"/>
<rect x="920" y="583" width="76" height="1.2" fill="#6a6a6a"/>
<rect x="957" y="579" width="3.2" height="9" fill="#6a6a6a"/>

<g>
<text x="458.45" y="7.00" font-size="9.8" fill="#ffffff" textLength="87.35" lengthAdjust="spacingAndGlyphs" stroke="#ffffff" stroke-width="0.12">Documento1  -  Word</text>
<text x="860.30" y="6.50" font-size="10.4" fill="#2b579a" textLength="34.60" lengthAdjust="spacingAndGlyphs" stroke="#2b579a" stroke-width="0.05">Inic. ses.</text>
<text x="990.80" y="32.60" font-size="10.4" fill="#ffffff" stroke="#ffffff" stroke-width="0.12">Co</text>
<text x="15.30" y="32.60" font-size="10" fill="#2b579a" textLength="22.60" lengthAdjust="spacingAndGlyphs" stroke="#2b579a" stroke-width="0.3">Inicio</text>
<text x="57.70" y="32.60" font-size="10" fill="#f4f6fa" textLength="30.60" lengthAdjust="spacingAndGlyphs" stroke="#f4f6fa" stroke-width="0.15">Insertar</text>
<text x="108.70" y="32.60" font-size="10" fill="#f4f6fa" textLength="27.60" lengthAdjust="spacingAndGlyphs" stroke="#f4f6fa" stroke-width="0.15">Diseño</text>
<text x="156.70" y="32.60" font-size="10" fill="#f4f6fa" textLength="46.60" lengthAdjust="spacingAndGlyphs" stroke="#f4f6fa" stroke-width="0.15">Disposición</text>
<text x="223.70" y="32.60" font-size="10" fill="#f4f6fa" textLength="46.20" lengthAdjust="spacingAndGlyphs" stroke="#f4f6fa" stroke-width="0.15">Referencias</text>
<text x="290.10" y="32.60" font-size="10" fill="#f4f6fa" textLength="69.20" lengthAdjust="spacingAndGlyphs" stroke="#f4f6fa" stroke-width="0.15">Correspondencia</text>
<text x="379.10" y="32.60" font-size="10" fill="#f4f6fa" textLength="29.95" lengthAdjust="spacingAndGlyphs" stroke="#f4f6fa" stroke-width="0.15">Revisar</text>
<text x="427.70" y="32.60" font-size="10" fill="#f4f6fa" textLength="20.10" lengthAdjust="spacingAndGlyphs" stroke="#f4f6fa" stroke-width="0.15">Vista</text>
<text x="467.70" y="32.60" font-size="10" fill="#f4f6fa" textLength="26.60" lengthAdjust="spacingAndGlyphs" stroke="#f4f6fa" stroke-width="0.15">Ayuda</text>
<text x="535.45" y="32.60" font-size="10" fill="#f4f6fa" textLength="74.85" lengthAdjust="spacingAndGlyphs" stroke="#f4f6fa" stroke-width="0.15">¿Qué desea hacer?</text>
<text x="8.70" y="55.90" font-size="9.6" fill="#a8a8a8" textLength="25.10" lengthAdjust="spacingAndGlyphs" stroke="#a8a8a8" stroke-width="0.3">Cortar</text>
<text x="8.70" y="74.50" font-size="9.6" fill="#a8a8a8" textLength="26.80" lengthAdjust="spacingAndGlyphs" stroke="#a8a8a8" stroke-width="0.3">Copiar</text>
<text x="8.70" y="92.60" font-size="9.6" fill="#262626" textLength="62.10" lengthAdjust="spacingAndGlyphs" stroke="#262626" stroke-width="0.3">Copiar formato</text>
<text x="-0.80" y="111.20" font-size="9.6" fill="#333333" textLength="37.70" lengthAdjust="spacingAndGlyphs" stroke="#333333" stroke-width="0.42">tapapeles</text>
<text x="90.60" y="62.80" font-size="9.8" fill="#333" textLength="64.10" lengthAdjust="spacingAndGlyphs" stroke="#333" stroke-width="0.15">Calibri (Cuerpo)</text>
<text x="177.20" y="62.80" font-size="10" fill="#3a3a3a" stroke="#3a3a3a" stroke-width="0.05">11</text>
<text x="174.10" y="111.20" font-size="9.6" fill="#333333" textLength="27.60" lengthAdjust="spacingAndGlyphs" stroke="#333333" stroke-width="0.42">Fuente</text>
<text x="380.70" y="111.20" font-size="9.6" fill="#333333" textLength="28.60" lengthAdjust="spacingAndGlyphs" stroke="#333333" stroke-width="0.42">Párrafo</text>
<text x="683.70" y="111.20" font-size="9.6" fill="#333333" textLength="25.60" lengthAdjust="spacingAndGlyphs" stroke="#333333" stroke-width="0.42">Estilos</text>
<text x="938.70" y="111.20" font-size="9.6" fill="#333333" textLength="29.60" lengthAdjust="spacingAndGlyphs" stroke="#333333" stroke-width="0.42">Edición</text>
<text x="932.60" y="56.40" font-size="9.6" fill="#262626" textLength="27.10" lengthAdjust="spacingAndGlyphs" stroke="#262626" stroke-width="0.3">Buscar</text>
<text x="932.70" y="74.20" font-size="9.6" fill="#262626" textLength="46.60" lengthAdjust="spacingAndGlyphs" stroke="#262626" stroke-width="0.3">Reemplazar</text>
<text x="932.70" y="92.30" font-size="9.6" fill="#262626" textLength="45.60" lengthAdjust="spacingAndGlyphs" stroke="#262626" stroke-width="0.3">Seleccionar</text>
<text x="509.80" y="67.40" font-size="10.8" fill="#1e1e1e" textLength="45.00" lengthAdjust="spacingAndGlyphs" stroke="#1e1e1e" stroke-width="0.45">AaBbCcDc</text>
<text x="564.80" y="67.40" font-size="10.8" fill="#1e1e1e" textLength="44.40" lengthAdjust="spacingAndGlyphs" stroke="#1e1e1e" stroke-width="0.45">AaBbCcDc</text>
<text x="619.85" y="69.30" font-size="14.6" fill="#4a6db0" textLength="44.30" lengthAdjust="spacingAndGlyphs">AaBbCc</text>
<text x="674.85" y="68.30" font-size="12" fill="#4a6db0" textLength="44.30" lengthAdjust="spacingAndGlyphs">AaBbCcD</text>
<text x="729.75" y="69.30" font-size="23" fill="#111111" textLength="42.50" lengthAdjust="spacingAndGlyphs" stroke="#fff" stroke-width="0.55">AaB</text>
<text x="783.85" y="67.60" font-size="10.2" fill="#6f6f6f" textLength="45.30" lengthAdjust="spacingAndGlyphs">AaBbCcD</text>
<text x="838.85" y="67.60" font-size="10.4" fill="#404040" textLength="45.30" lengthAdjust="spacingAndGlyphs" font-style="italic" stroke="#404040" stroke-width="0.3">AaBbCcDc</text>
<text x="520.70" y="86.50" font-size="9.6" fill="#444" textLength="30.60" lengthAdjust="spacingAndGlyphs" stroke="#444" stroke-width="0.12">Normal</text>
<text x="512.70" y="86.50" font-size="9.6" fill="#aaa" textLength="5.60" lengthAdjust="spacingAndGlyphs" stroke="#aaa" stroke-width="0.3">¶</text>
<text x="563.70" y="86.50" font-size="9.6" fill="#aaa" textLength="5.60" lengthAdjust="spacingAndGlyphs" stroke="#aaa" stroke-width="0.3">¶</text>
<text x="571.70" y="86.50" font-size="9.6" fill="#444" textLength="38.60" lengthAdjust="spacingAndGlyphs" stroke="#444" stroke-width="0.12">Sin espa...</text>
<text x="627.70" y="86.50" font-size="9.6" fill="#444" textLength="28.60" lengthAdjust="spacingAndGlyphs" stroke="#444" stroke-width="0.12">Título 1</text>
<text x="681.70" y="86.50" font-size="9.6" fill="#444" textLength="29.60" lengthAdjust="spacingAndGlyphs" stroke="#444" stroke-width="0.12">Título 2</text>
<text x="740.70" y="86.50" font-size="9.6" fill="#444" textLength="22.60" lengthAdjust="spacingAndGlyphs" stroke="#444" stroke-width="0.12">Título</text>
<text x="787.70" y="86.50" font-size="9.6" fill="#444" textLength="37.60" lengthAdjust="spacingAndGlyphs" stroke="#444" stroke-width="0.12">Subtítulo</text>
<text x="837.70" y="86.50" font-size="9.6" fill="#444" textLength="46.60" lengthAdjust="spacingAndGlyphs" stroke="#444" stroke-width="0.12">Énfasis sutil</text>
<text x="455.70" y="232.60" font-size="27.2" fill="#000" textLength="80.80" lengthAdjust="spacingAndGlyphs" font-weight="bold" stroke="#000" stroke-width="0.3">ÍNDICE</text>
<text x="279.30" y="262.60" font-size="9.8" fill="#1a1a1a" textLength="65.20" lengthAdjust="spacingAndGlyphs" stroke="#1a1a1a" stroke-width="0.26">I. Introducción</text>
<text x="279.30" y="307.00" font-size="9.8" fill="#1a1a1a" textLength="70.80" lengthAdjust="spacingAndGlyphs" stroke="#1a1a1a" stroke-width="0.26">II. Construcción</text>
<text x="279.30" y="350.50" font-size="9.8" fill="#1a1a1a" textLength="127.90" lengthAdjust="spacingAndGlyphs" stroke="#1a1a1a" stroke-width="0.26">III. Técnicas de construcción</text>
<text x="279.30" y="395.10" font-size="9.8" fill="#1a1a1a" textLength="72.90" lengthAdjust="spacingAndGlyphs" stroke="#1a1a1a" stroke-width="0.26">IV. La ingienería</text>
<text x="279.30" y="438.60" font-size="9.8" fill="#1a1a1a" textLength="72.00" lengthAdjust="spacingAndGlyphs" stroke="#1a1a1a" stroke-width="0.26">V. Conclusiones</text>
<text x="677.60" y="262.60" font-size="10.2" fill="#1a1a1a" stroke="#1a1a1a" stroke-width="0.26">1</text>
<text x="677.60" y="307.00" font-size="10.2" fill="#1a1a1a" stroke="#1a1a1a" stroke-width="0.26">2</text>
<text x="677.60" y="350.50" font-size="10.2" fill="#1a1a1a" stroke="#1a1a1a" stroke-width="0.26">3</text>
<text x="677.60" y="395.10" font-size="10.2" fill="#1a1a1a" stroke="#1a1a1a" stroke-width="0.26">4</text>
<text x="677.60" y="438.60" font-size="10.2" fill="#1a1a1a" stroke="#1a1a1a" stroke-width="0.26">5</text>
<text x="-0.80" y="587.00" font-size="9" fill="#3a3a3a" textLength="12.10" lengthAdjust="spacingAndGlyphs" stroke="#3a3a3a" stroke-width="0.3">e 1</text>
<text x="27.30" y="587.00" font-size="9" fill="#3a3a3a" textLength="44.60" lengthAdjust="spacingAndGlyphs" stroke="#3a3a3a" stroke-width="0.3">19 palabras</text>
<text x="134.30" y="587.00" font-size="9" fill="#3a3a3a" textLength="56.00" lengthAdjust="spacingAndGlyphs" stroke="#3a3a3a" stroke-width="0.3">Español (Perú)</text>
</g>
<rect x="760.9" y="51" width="12.7" height="7.4" fill="#fff"/>
<path d="M770.4 53 C770.8 55 770.6 57 769.8 58.6" fill="none" stroke="#111" stroke-width="1.3"/>
</svg>
</body></html>
